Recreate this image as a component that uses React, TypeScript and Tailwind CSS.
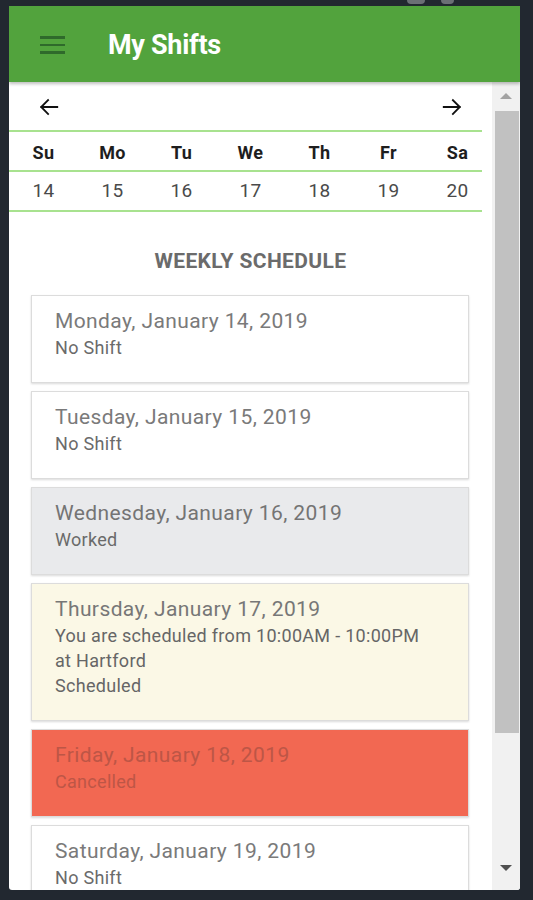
import React from "react";

const days = ["Su", "Mo", "Tu", "We", "Th", "Fr", "Sa"];
const dates = ["14", "15", "16", "17", "18", "19", "20"];

type Card = { title: string; lines: string[]; bg: string; text: string; sub: string };

const cards: Card[] = [
  { title: "Monday, January 14, 2019", lines: ["No Shift"], bg: "bg-white", text: "text-[#7a7a7a]", sub: "text-[#6a6a6a]" },
  { title: "Tuesday, January 15, 2019", lines: ["No Shift"], bg: "bg-white", text: "text-[#7a7a7a]", sub: "text-[#6a6a6a]" },
  { title: "Wednesday, January 16, 2019", lines: ["Worked"], bg: "bg-[#e9eaec]", text: "text-[#747474]", sub: "text-[#6a6a6a]" },
  {
    title: "Thursday, January 17, 2019",
    lines: ["You are scheduled from 10:00AM - 10:00PM at Hartford", "Scheduled"],
    bg: "bg-[#fbf8e6]",
    text: "text-[#777777]",
    sub: "text-[#666666]",
  },
  { title: "Friday, January 18, 2019", lines: ["Cancelled"], bg: "bg-[#f26852]", text: "text-[#bd5646]", sub: "text-[#bd5646]" },
  { title: "Saturday, January 19, 2019", lines: ["No Shift"], bg: "bg-white", text: "text-[#7a7a7a]", sub: "text-[#6a6a6a]" },
];

export default function App() {
  return (
    <div className="h-[900px] w-[533px] overflow-hidden bg-[#222830] pt-[6px] pl-[9px]" style={{ fontFamily: "Roboto, 'Noto Sans', Arial, sans-serif" }}>
      <div className="relative">
        <div className="absolute -top-[6px] left-[398px] h-[4px] w-[18px] rounded-b-sm bg-[#6b6f75]" />
        <div className="absolute -top-[6px] left-[432px] h-[4px] w-[13px] rounded-b-sm bg-[#6b6f75]" />
      </div>
      <div className="flex h-[884px] w-[511px] flex-col overflow-hidden rounded-b-[3px] bg-white">
        {/* header */}
        <div className="relative z-10 flex h-[76px] shrink-0 items-center bg-[#52a33d] shadow-[0_2px_3px_rgba(0,0,0,0.25)]">
          <div className="ml-[31px] mt-[2px] flex w-[25px] flex-col gap-[5px]">
            <div className="h-[2.5px] w-full bg-[#2f6a2b]" />
            <div className="h-[2.5px] w-full bg-[#2f6a2b]" />
            <div className="h-[2.5px] w-full bg-[#2f6a2b]" />
          </div>
          <div className="ml-[43px] mt-[2px] text-[27px] font-bold tracking-[-0.3px] text-white">My Shifts</div>
        </div>
        <div className="flex min-h-0 flex-1">
          {/* content */}
          <div className="min-w-0 flex-1 overflow-hidden">
            <div className="flex h-[48px] items-center justify-between px-[29px] pt-[1px]">
              <svg width="22" height="22" viewBox="0 0 24 24" fill="none" stroke="#111" strokeWidth="2" strokeLinecap="square">
                <path d="M21 12H3.5M11 4.5 3.5 12l7.5 7.5" />
              </svg>
              <svg width="22" height="22" viewBox="0 0 24 24" fill="none" stroke="#111" strokeWidth="2" strokeLinecap="square">
                <path d="M3 12h17.5M13 4.5l7.5 7.5-7.5 7.5" />
              </svg>
            </div>
            <div className="mr-[10px] h-[2px] bg-[#a8e28f]" />
            <div className="grid h-[38px] grid-cols-7 items-center pt-[2px]">
              {days.map((d) => (
                <div key={d} className="text-center text-[18px] font-bold tracking-[0.3px] text-[#1e1e1e]">{d}</div>
              ))}
            </div>
            <div className="mr-[10px] h-[2px] bg-[#a8e28f]" />
            <div className="grid h-[38px] grid-cols-7 items-center pt-[1px]">
              {dates.map((d) => (
                <div key={d} className="text-center text-[19px] tracking-[0.3px] text-[#4a4a4a]">{d}</div>
              ))}
            </div>
            <div className="mr-[10px] h-[2px] bg-[#a8e28f]" />
            <div className="pt-[34px] text-center text-[21px] font-bold tracking-[0.4px] text-[#6b6b6b]">WEEKLY SCHEDULE</div>
            <div className="mt-[17px] flex flex-col gap-[8px] pl-[22px] pr-[23px]">
              {cards.map((c) => (
                <div
                  key={c.title}
                  className={`${c.bg} border border-[#dcdcdc] pl-[23px] pr-[34px] pt-[12px] pb-[22px] shadow-[0_1px_2px_rgba(0,0,0,0.15)]`}
                >
                  <div className={`text-[21px] leading-[27px] tracking-[0.4px] ${c.text}`}>{c.title}</div>
                  {c.lines.map((l) => (
                    <div key={l} className={`text-[18px] leading-[25px] tracking-[0.3px] ${c.sub}`}>{l}</div>
                  ))}
                </div>
              ))}
            </div>
          </div>
          {/* scrollbar */}
          <div className="relative flex w-[28px] shrink-0 flex-col items-center bg-[#f1f1f1]">
            <div className="mt-[11px] h-0 w-0 border-x-[6px] border-b-[6px] border-x-transparent border-b-[#a3a3a3]" />
            <div className="mt-[12px] ml-[3px] mr-[1px] h-[622px] w-[24px] bg-[#c1c1c1]" />
            <div className="mt-[132px] h-0 w-0 border-x-[6px] border-t-[6px] border-x-transparent border-t-[#505050]" />
          </div>
        </div>
      </div>
    </div>
  );
}
